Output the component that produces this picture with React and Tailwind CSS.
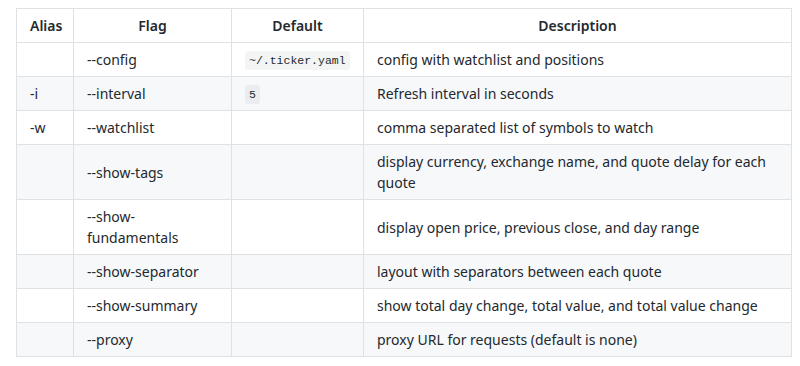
import React from "react";

const rows = [
  ["", "--config", "~/.ticker.yaml", "config with watchlist and positions"],
  ["-i", "--interval", "5", "Refresh interval in seconds"],
  ["-w", "--watchlist", "", "comma separated list of symbols to watch"],
  ["", "--show-tags", "", "display currency, exchange name, and quote delay for each quote"],
  ["", "--show-fundamentals", "", "display open price, previous close, and day range"],
  ["", "--show-separator", "", "layout with separators between each quote"],
  ["", "--show-summary", "", "show total day change, total value, and total value change"],
  ["", "--proxy", "", "proxy URL for requests (default is none)"],
];

export default function App() {
  const cell = "border border-[#dfe2e5] px-[13px] py-[6px] align-middle";
  return (
    <div className="w-[800px] h-[366px] bg-white pt-[8px] pl-[16px] text-[#24292e] text-[14px] leading-[21px]" style={{ fontFamily: '"Noto Sans", "Open Sans", sans-serif' }}>
      <table className="table-fixed border-collapse w-[775px]">
        <colgroup>
          <col className="w-[57px]" />
          <col className="w-[158px]" />
          <col className="w-[132px]" />
          <col className="w-[428px]" />
        </colgroup>
        <thead>
          <tr className="bg-white">
            <th className={cell + " font-semibold text-left"}>Alias</th>
            <th className={cell + " font-semibold text-center"}>Flag</th>
            <th className={cell + " font-semibold text-center"}>Default</th>
            <th className={cell + " font-semibold text-center"}>Description</th>
          </tr>
        </thead>
        <tbody>
          {rows.map((r, i) => (
            <tr key={i} className={i % 2 === 1 ? "bg-[#f6f8fa]" : "bg-white"}>
              <td className={cell}>{r[0]}</td>
              <td className={cell}>{r[1]}</td>
              <td className={cell}>
                {r[2] && (
                  <code className="bg-[rgba(27,31,35,0.05)] rounded-[3px] px-[4px] py-[3px] text-[11.5px] leading-none align-[1px]" style={{ fontFamily: '"Liberation Mono", monospace' }}>
                    {r[2]}
                  </code>
                )}
              </td>
              <td className={cell}>{r[3]}</td>
            </tr>
          ))}
        </tbody>
      </table>
    </div>
  );
}
